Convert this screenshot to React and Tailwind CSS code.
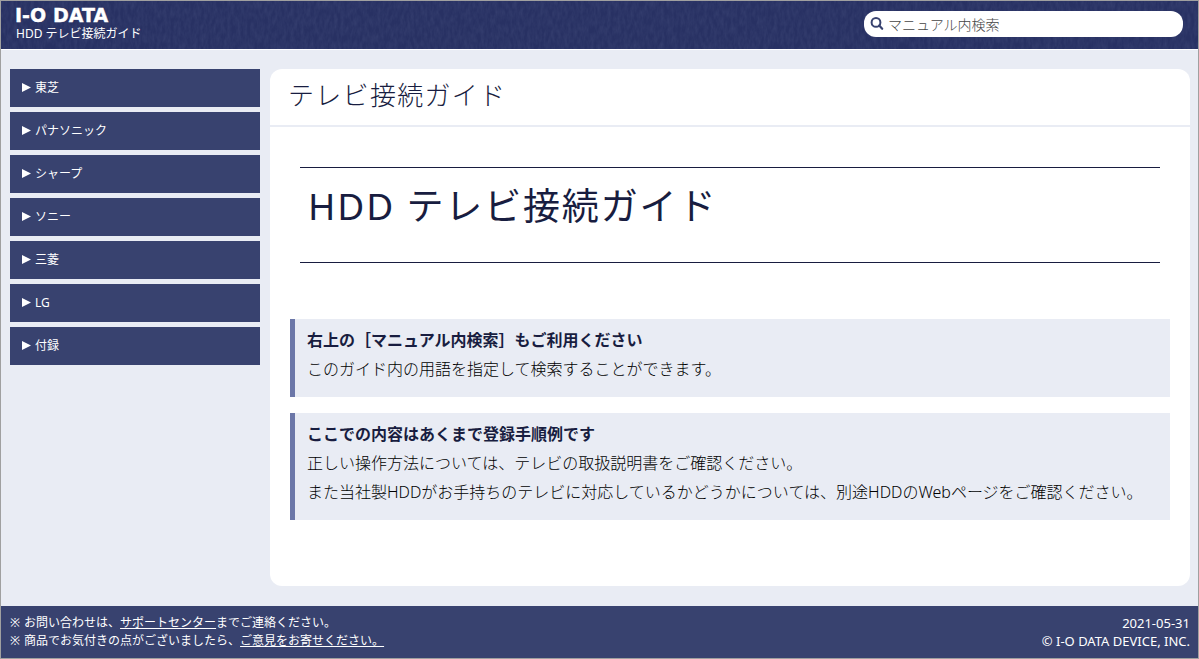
import { useState } from 'react';

const navItems = ['東芝', 'パナソニック', 'シャープ', 'ソニー', '三菱', 'LG', '付録'];

const notes = [
    {
        title: '右上の［マニュアル内検索］もご利用ください',
        lines: ['このガイド内の用語を指定して検索することができます。']
    },
    {
        title: 'ここでの内容はあくまで登録手順例です',
        lines: [
            '正しい操作方法については、テレビの取扱説明書をご確認ください。',
            'また当社製HDDがお手持ちのテレビに対応しているかどうかについては、別途HDDのWebページをご確認ください。'
        ]
    }
];

const Logo = () => (
    <svg
        className="overflow-visible"
        width="100"
        height="20"
        viewBox="0 0 100 20"
        role="img"
        aria-label="I-O DATA">
        <g
            fill="#fff"
            stroke="#fff"
            strokeWidth="0.4"
            fontFamily="DejaVu Sans, sans-serif"
            fontWeight="700"
            fontSize="19">
            <text x="-1" y="17">I-O</text>
            <text x="37" y="17">DATA</text>
        </g>
    </svg>
);

// woven cloth look behind the header
const HeaderTexture = () => (
    <svg className="absolute inset-0 h-full w-full" aria-hidden="true">
        <filter id="cloth" x="0" y="0" width="100%" height="100%">
            <feTurbulence type="fractalNoise" baseFrequency="0.3 0.12" numOctaves="3" seed="4" />
            <feColorMatrix values="0 0 0 0 0.3  0 0 0 0 0.36  0 0 0 0 0.56  0.7 0 0 0 -0.2" />
        </filter>
        <rect width="100%" height="100%" filter="url(#cloth)" opacity="0.25" />
    </svg>
);

const Header = () => {
    const [keyword, setKeyword] = useState('');

    return (
        <header className="relative border-b border-white bg-[#283163] text-white">
            <HeaderTexture />
            <div className="relative flex h-12 items-start justify-between px-[15px]">
                <div className="flex flex-col pt-1">
                    <a href="#">
                        <Logo />
                    </a>
                    <span className="text-xs leading-[18px]">HDD テレビ接続ガイド</span>
                </div>
                <form
                    role="search"
                    onSubmit={(e) => e.preventDefault()}
                    className="mt-2.5 flex h-[26px] w-[319px] items-center rounded-xl bg-white pl-1.5">
                    <svg
                        className="h-[14px] w-[14px] shrink-0"
                        viewBox="0 0 14 14"
                        fill="none"
                        stroke="#38426f"
                        strokeWidth="2"
                        strokeLinecap="round"
                        aria-hidden="true">
                        <circle cx="6" cy="5.4" r="4.4" />
                        <path d="M9.2 8.6 12.2 11.8" strokeWidth="2.2" />
                    </svg>
                    <input
                        type="text"
                        aria-label="マニュアル内検索"
                        placeholder="マニュアル内検索"
                        value={keyword}
                        onChange={(e) => setKeyword(e.target.value)}
                        className="ml-1 h-full w-full bg-transparent text-sm font-light text-gray-800 placeholder:text-[#444] focus:outline-none"
                    />
                </form>
            </div>
        </header>
    );
};

const Sidebar = () => (
    <nav className="w-[250px] shrink-0">
        <ul className="flex flex-col gap-[5px]">
            {navItems.map((item) => (
                <li key={item}>
                    <a
                        href="#"
                        className="flex h-[38px] items-center gap-1 bg-[#38426f] px-3 text-xs text-white hover:bg-[#6c77a8]">
                        <svg width="9" height="10" viewBox="0 0 9 10" fill="#fff" aria-hidden="true">
                            <path d="M0 0 9 4.5 0 9z" />
                        </svg>
                        {item}
                    </a>
                </li>
            ))}
        </ul>
    </nav>
);

const Note = ({ title, lines }) => (
    <section className="border-l-[5px] border-[#6c77a8] bg-[#e9ecf4] px-3 pt-[7px] pb-[13px] leading-[29px]">
        <h3 className="font-bold text-[#181d40]">{title}</h3>
        {lines.map((line) => (
            <p key={line} className="font-light text-black">
                {line}
            </p>
        ))}
    </section>
);

const Footer = () => (
    <footer className="flex justify-between bg-[#38426f] pt-2 pr-2 pb-2 pl-[9px] text-xs leading-[18px] text-white">
        <ul>
            <li className="flex gap-1">
                <span>※</span>
                <p>
                    お問い合わせは、
                    <a href="#" className="underline">サポートセンター</a>
                    までご連絡ください。
                </p>
            </li>
            <li className="flex gap-1">
                <span>※</span>
                <p>
                    商品でお気付きの点がございましたら、
                    <a href="#" className="underline">ご意見をお寄せください。</a>
                </p>
            </li>
        </ul>
        <div className="text-right text-[13px]">
            <p>2021-05-31</p>
            <p>© I-O DATA DEVICE, INC.</p>
        </div>
    </footer>
);

const App = () => {
    return (
        <div className="flex min-h-screen flex-col border border-[#a0a0a0] bg-[#e9ecf4] font-['Noto_Sans','Noto_Sans_CJK_JP',sans-serif]">
            <Header />
            <div className="flex grow items-start gap-2.5 pt-[19px] pr-2 pb-5 pl-[9px]">
                <Sidebar />
                <main className="min-w-0 grow rounded-xl bg-white pb-[66px] text-[#181d40]">
                    <h2 className="border-b-2 border-[#e9ecf4] px-[18px] pt-1 pb-2 text-[26px] leading-[44px] font-light tracking-wider">
                        テレビ接続ガイド
                    </h2>
                    <div className="px-5 pt-10">
                        <h1 className="mx-2.5 border-y border-[#181d40] px-2 pt-1.5 pb-6 text-[37px] leading-[64px] tracking-wider">
                            HDD テレビ接続ガイド
                        </h1>
                        <div className="mt-14 flex flex-col gap-4">
                            {notes.map((note) => (
                                <Note key={note.title} title={note.title} lines={note.lines} />
                            ))}
                        </div>
                    </div>
                </main>
            </div>
            <Footer />
        </div>
    );
};

export default App;
